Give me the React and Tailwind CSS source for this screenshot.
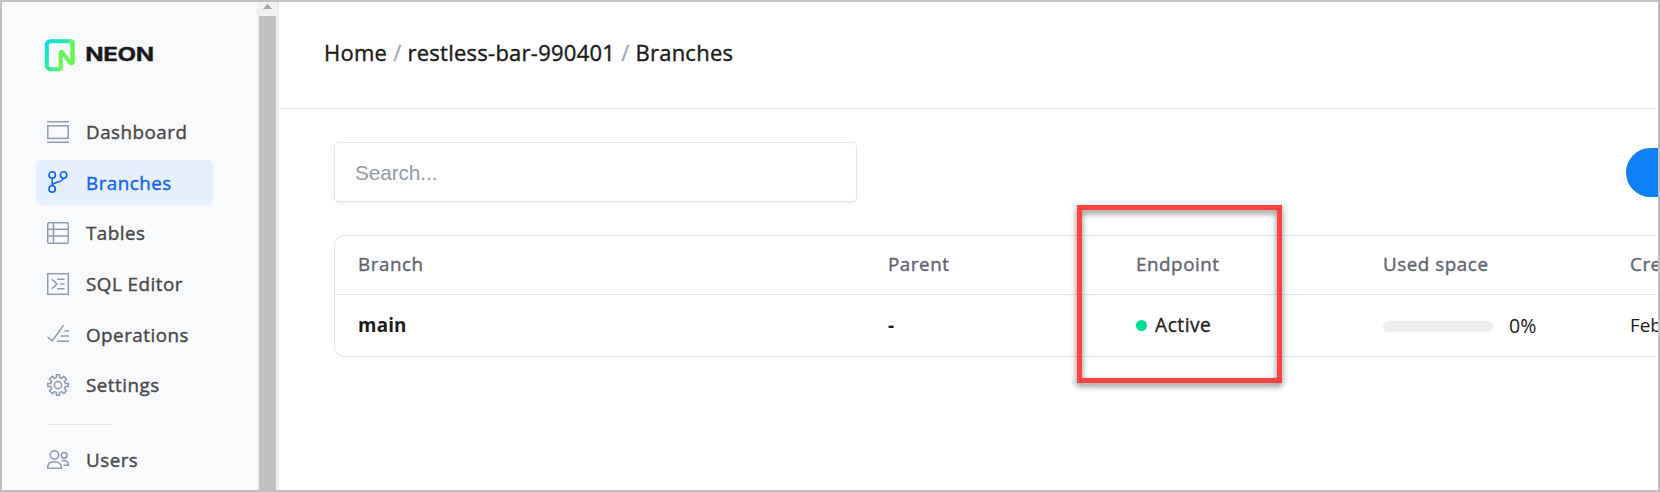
const iconProps = {
  width: 22,
  height: 22,
  viewBox: '0 0 22 22',
  fill: 'none',
  stroke: 'currentColor',
  strokeWidth: 1.5,
};

function DashboardIcon() {
  return (
    <svg {...iconProps}>
      <path d="M0 .8h22M0 21.2h22" />
      <rect x=".8" y="4.8" width="20.4" height="12.6" />
    </svg>
  );
}

function BranchesIcon() {
  return (
    <svg {...iconProps} strokeWidth="1.6">
      <circle cx="5.2" cy="4" r="3.2" />
      <circle cx="16.6" cy="4" r="3.2" />
      <circle cx="5.2" cy="18" r="3.2" />
      <path d="M5.2 7.2v7.6M16.4 7.2c-.3 2.2-1.5 2.5-3.5 3.2L8.5 11.8c-2 .6-3.3 1.2-3.3 3" />
    </svg>
  );
}

function TablesIcon() {
  return (
    <svg {...iconProps}>
      <rect x=".7" y=".7" width="20.6" height="20.6" rx="1.6" />
      <path d="M.7 7.3h20.6M.7 14h20.6M6.5.7v20.6" />
    </svg>
  );
}

function SqlIcon() {
  return (
    <svg {...iconProps}>
      <rect x=".7" y=".7" width="20.6" height="20.6" />
      <path d="M4.7 6l5.3 5-5.3 5M10 6.3h7.5M13 11h4.5M10 15.7h7.5" />
    </svg>
  );
}

function OperationsIcon() {
  return (
    <svg {...iconProps}>
      <path d="M.4 13.700l4.800 4.200L16.600 2.200M17.500 8H22M13.800 13H22M10 18.300h12" />
    </svg>
  );
}

function SettingsIcon() {
  return (
    <svg {...iconProps}>
      <circle cx="11" cy="11" r="3.6" />
      <path d="M9.400.7h3.200v2.900l2 .8 2-2 2.900 2.900-2 2 .9 2.100h2.900v3.200h-2.900l-.9 2.100 2 2-2.900 2.900-2-2-2 .8v2.900H9.400v-2.900l-2-.8-2 2-2.900-2.900 2-2-.9-2.100H.7V9.400h2.900l.9-2.100-2-2 2.900-2.900 2 2 2-.8z" />
    </svg>
  );
}

function UsersIcon() {
  return (
    <svg {...iconProps}>
      <circle cx="7.5" cy="6" r="4.2" />
      <path d="M.7 19.300v-1c0-3.500 2.800-5.500 6.800-5.500s6.800 2 6.800 5.500v1z" />
      <circle cx="17.2" cy="6.3" r="2.9" />
      <path d="M14.800 11.900c3.800-1 6.500.6 6.500 3.200v1.200h-4.600" />
    </svg>
  );
}

function Logo() {
  return (
    <svg width="112" height="34" viewBox="0 0 112 34">
      <defs>
        <linearGradient id="frame" x1="0" y1="0" x2=".9" y2="1">
          <stop offset="0" stopColor="#00dfe6" />
          <stop offset="1" stopColor="#5bf567" />
        </linearGradient>
      </defs>
      <path
        d="M16 31.200H6.500a3.700 3.700 0 0 1-3.700-3.700V6.900A3.700 3.700 0 0 1 6.500 3.200H26.500"
        fill="none"
        stroke="url(#frame)"
        strokeWidth="4"
      />
      <path
        d="M14.700 33.200V15.500c0-4 3.300-4.600 5.200-2.300l6.400 8.600V1.200h.4a4.100 4.100 0 0 1 4.100 4.100v18.500c0 3.500-4.100 4.700-6.300 2l-5.700-7.600v11a4 4 0 0 1-4 4z"
        fill="#62f755"
      />
      <text
        x="41.300"
        y="23.300"
        textLength="68.500"
        lengthAdjust="spacingAndGlyphs"
        fill="#1a1a1a"
        className="font-['Inter',sans-serif] text-[18.500px] font-bold tracking-[-0.300px] [stroke:#1a1a1a] [stroke-width:0.300px]"
      >
        NEON
      </text>
    </svg>
  );
}

const navItems = [
  { label: 'Dashboard', Icon: DashboardIcon },
  { label: 'Branches', Icon: BranchesIcon, active: true },
  { label: 'Tables', Icon: TablesIcon },
  { label: 'SQL Editor', Icon: SqlIcon },
  { label: 'Operations', Icon: OperationsIcon },
  { label: 'Settings', Icon: SettingsIcon },
];

function NavItem({ label, Icon, active }) {
  return (
    <a
      className={
        'flex h-[45px] w-[177px] items-center gap-[17px] rounded-[5px] pl-[11px] text-[18.800px] tracking-[0.500px] [-webkit-text-stroke:0.4px_currentColor] ' +
        (active ? 'bg-[#e6f0ff] text-[#0f62fe]' : 'text-[#474747]')
      }
    >
      <span className={active ? 'text-[#0f62fe]' : 'text-[#8e99b3]'}>
        <Icon />
      </span>
      <span className="pt-px">{label}</span>
    </a>
  );
}

function Sidebar() {
  return (
    <aside className="w-[255px] shrink-0 bg-[#f8fafc] pt-9 pl-[34px]">
      <div className="pl-2">
        <Logo />
      </div>
      <nav className="mt-[37px] flex flex-col gap-[5.700px]">
        {navItems.map((item) => (
          <NavItem key={item.label} {...item} />
        ))}
      </nav>
      <hr className="mt-[17px] mb-3 ml-[11px] w-[66px] border-[#e4e5e7]" />
      <NavItem label="Users" Icon={UsersIcon} />
    </aside>
  );
}

function Scrollbar() {
  return (
    <div className="flex w-[22px] shrink-0 flex-col border-r border-[#e8e8ea] bg-[#f1f1f1] pr-[2px] pl-[2px]">
      <div className="flex h-[14px] items-start justify-center pt-[2px]">
        <svg width="9" height="5" viewBox="0 0 9 5">
          <path d="M4.500 0L9 5H0z" fill="#a3a3a3" />
        </svg>
      </div>
      <div className="w-[17px] flex-1 bg-[#c1c1c1]" />
    </div>
  );
}

function BranchTable() {
  return (
    <div className="mt-[33px] w-[1500px] rounded-[10px] border border-[#e4e5e7]">
      <div className="grid h-[59px] grid-cols-[530px_248px_247px_247px_1fr] items-center border-b border-[#e4e5e7] pb-[2px] pl-[23px] text-[18.800px] tracking-[0.550px] text-[#5f6570] [-webkit-text-stroke:0.4px_currentColor]">
        <span>Branch</span>
        <span>Parent</span>
        <span>Endpoint</span>
        <span>Used space</span>
        <span>Created at</span>
      </div>
      <div className="grid h-[61px] grid-cols-[530px_248px_247px_247px_1fr] items-center pl-[23px] text-[18.800px] text-[#1a1a1a]">
        <span className="font-bold tracking-[0.200px]">main</span>
        <span className="font-bold">-</span>
        <span className="flex items-center gap-2 text-[19.200px] tracking-[0.500px] [-webkit-text-stroke:0.3px_currentColor]">
          <i className="size-[11px] rounded-full bg-[#00df95]" />
          Active
        </span>
        <span className="flex items-center gap-[16px]">
          <i className="mt-[2px] h-[11px] w-[110px] rounded-full bg-[#eeeff1]" />
          <span className="pt-px text-[19.500px]">0%</span>
        </span>
        <span>Feb 6, 2023</span>
      </div>
    </div>
  );
}

export default function App() {
  return (
    <div className="relative flex h-[492px] w-[1660px] overflow-hidden border-2 border-[#c0c0c0] bg-white font-['Open_Sans',sans-serif]">
      <Sidebar />
      <Scrollbar />
      <main className="min-w-0 flex-1 overflow-hidden">
        <header className="flex h-[107px] items-center gap-[6px] border-b border-[#e4e5e7] pb-[6px] pl-[45px] text-[22px] tracking-[0.250px] text-[#1a1a1a] [-webkit-text-stroke:0.4px_currentColor]">
          <span>Home</span>
          <span className="text-[#a4abc0]">/</span>
          <span>restless-bar-990401</span>
          <span className="text-[#a4abc0]">/</span>
          <span>Branches</span>
        </header>
        <section className="w-[1600px] pt-[33px] pl-[55px]">
          <div className="flex items-center justify-between">
            <input
              className="h-[60px] w-[523px] rounded-[5px] border border-[#e4e5e7] px-5 pt-[2px] font-['Liberation_Sans',sans-serif] text-[20.800px] tracking-[-0.100px] shadow-[0_2px_3px_rgba(0,0,0,0.05)] placeholder:text-[#929ca6]"
              placeholder="Search..."
            />
            <button className="mr-[53px] h-[49px] w-[200px] rounded-full bg-[#0f80f5]" />
          </div>
          <BranchTable />
        </section>
      </main>
      <div className="absolute top-[203px] left-[1075px] h-[178px] w-[205px] border-[5px] border-[#ff4343] drop-shadow-[0_3px_3px_rgba(0,0,0,0.5)]" />
    </div>
  );
}
